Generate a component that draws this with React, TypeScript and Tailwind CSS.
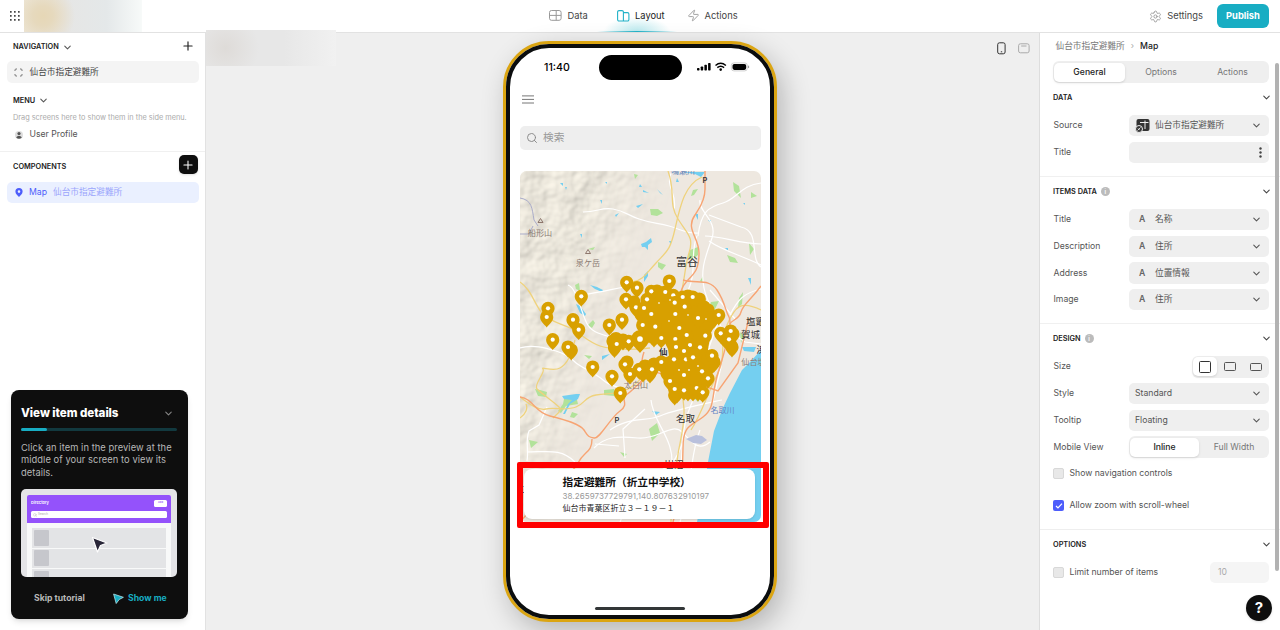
import React from "react";
import { ChevronDown, Search, Settings, Zap, Plus } from "lucide-react";

const SCREEN = "仙台市指定避難所";

function Chevron({ className = "" }: { className?: string }) {
  return <ChevronDown className={`shrink-0 ${className}`} size={11} strokeWidth={2.3} />;
}

function TopBar() {
  return (
    <header className="flex h-[33px] shrink-0 items-center border-b border-[#e2e2e2] bg-white">
      <svg className="ml-[10px]" width="10" height="10" viewBox="0 0 10 10" fill="#333">
        {[0, 4, 8].map((y) =>
          [0, 4, 8].map((x) => <rect key={`${x}-${y}`} x={x} y={y} width="1.7" height="1.7" rx="0.4" />)
        )}
      </svg>
      <div className="ml-1 h-[32px] w-[118px] bg-[radial-gradient(circle_at_16%_50%,#e6d7b6_0,#e6d9bd_10%,transparent_32%),linear-gradient(90deg,#efe9dc_0%,#e6e6e5_35%,#e4e8e9_70%,#f7faf9_100%)]" />
      <nav className="ml-[407px] flex h-full items-center text-[9.33px] text-[#444]">
        <div className="flex items-center">
          <svg width="13" height="11" viewBox="0 0 13 11" fill="none" stroke="#999" strokeWidth="1">
            <rect x="0.5" y="0.5" width="11.6" height="9.8" rx="2" />
            <path d="M0.5 5.4h11.6M7.2 0.5v9.8" />
          </svg>
          <span className="ml-[5.5px] w-[19.5px]">Data</span>
        </div>
        <div className="ml-[10px] flex h-full w-[80px] items-center bg-[linear-gradient(90deg,transparent,#22b2c8_50%,transparent),radial-gradient(ellipse_42%_48%_at_50%_100%,#b9e9ee_0%,transparent_100%)] bg-[length:100%_1px,100%_100%] bg-[position:bottom,center] bg-no-repeat pl-[20px] text-[#222]">
          <svg className="shrink-0" width="13" height="12" viewBox="0 0 13 12" fill="none" stroke="#22b2c8" strokeWidth="1.1">
            <path d="M6.4 2.6V2A1.4 1.4 0 0 0 5 .6H2A1.4 1.4 0 0 0 .6 2v7.6A1.4 1.4 0 0 0 2 11h4.4V2.6H10.500A1.400 1.400 0 0 1 11.900 4v5.600A1.400 1.400 0 0 1 10.500 11H6.400" />
          </svg>
          <span className="ml-[5px]">Layout</span>
        </div>
        <div className="ml-[9.5px] flex items-center">
          <Zap size={13} strokeWidth={1.7} className="text-[#999]" />
          <span className="ml-[5px]">Actions</span>
        </div>
      </nav>
      <div className="ml-auto flex items-center text-[9.33px] text-[#444]">
        <Settings size={13} strokeWidth={1.7} className="text-[#999]" />
        <span className="ml-[5px]">Settings</span>
        <button className="mr-[11px] ml-[14px] h-6 w-[52px] rounded-md bg-[#18adc3] text-[9.33px] font-bold text-white">Publish</button>
      </div>
    </header>
  );
}

function TutorialCard() {
  return (
    <section className="mt-auto mb-[11px] ml-[11px] flex h-[229px] w-[177px] flex-col rounded-lg bg-[#0e0e0e] px-[10px] text-[#b8b8b8] shadow-md">
      <div className="mt-[14px] flex h-[19px] items-center justify-between">
        <h2 className="text-[11.6px] font-extrabold tracking-[-0.05px] whitespace-nowrap text-white">View item details</h2>
        <Chevron className="mr-[4px] text-[#888]" />
      </div>
      <div className="mt-[5px] h-[3px] w-[156px] shrink-0 rounded-full bg-[#12393f]">
        <div className="h-full w-[26px] rounded-full bg-[#18adc3]" />
      </div>
      <p className="mt-[11px] text-[9.33px] leading-[12.4px] tracking-[0.06px] whitespace-nowrap">
        Click an item in the preview at the
        <br />
        middle of your screen to view its
        <br />
        details.
      </p>
      <div className="relative mt-[10px] h-[88px] w-[156px] shrink-0 overflow-hidden rounded-[5px] bg-[#e4e4e7] px-[6px] pt-[6px]">
        <div className="h-full rounded-t-[2px] bg-[#f8f9f9]">
          <div className="h-[28px] rounded-t-[2px] bg-[#9452fb] px-[4px] pt-[4px] text-white">
            <div className="flex h-[8px] items-center justify-between text-[4px] font-semibold">
              <span>Directory</span>
              <span className="flex h-[7px] w-[13px] items-center justify-center rounded-[1.5px] bg-white text-[2.500px] text-[#9452fb]">Add</span>
            </div>
            <div className="mt-[4px] flex h-[7px] items-center rounded-[1.5px] bg-white pl-[2px] text-[3px] text-[#aaa]">
              <Search size={4} />
              <span className="ml-[1px]">Search</span>
            </div>
          </div>
          <div className="mt-[5px] flex flex-col gap-[1px] px-[5px]">
            {[0, 1, 2].map((n) => (
              <div key={n} className="flex h-[19.5px] items-center bg-[#e3e4e6] pl-[2px]">
                <div className="h-[16px] w-[15px] rounded-[1px] bg-[#c6c7cc]" />
              </div>
            ))}
          </div>
        </div>
        <svg className="absolute top-[47px] left-[70px]" width="17" height="18" viewBox="0 0 17 18">
          <path d="M1.500 1.500l14.500 5.500-6.500 2.500-3 6.500z" fill="#292638" stroke="#fff" strokeWidth="1.200" strokeLinejoin="round" />
        </svg>
      </div>
      <div className="flex h-[42px] items-center pl-[13px] text-[8.670px] font-bold">
        <span className="w-[77px]">Skip tutorial</span>
        <svg className="ml-[2px]" width="11" height="11" viewBox="0 0 11 11">
          <path d="M.6 1l9.800 3.300-4.200 2.200-3 4z" fill="#18adc3" stroke="#b4e1e6" strokeWidth="0.800" strokeLinejoin="round" />
        </svg>
        <span className="ml-1 text-[#18adc3]">Show me</span>
      </div>
    </section>
  );
}

function Sidebar() {
  return (
    <aside className="flex w-[205px] shrink-0 flex-col bg-white text-[8.670px] text-[#444]">
      <div className="flex h-[27px] shrink-0 items-center pt-[1px] pr-[10px] pl-[13px] text-[7.330px] font-semibold text-[#222]">
        NAVIGATION
        <Chevron className="ml-[3px] text-[#555]" />
        <Plus size={14} strokeWidth={2} className="mb-[2px] ml-auto text-[#222]" />
      </div>
      <div className="mt-[1px] ml-[7px] flex h-[22px] w-[192px] shrink-0 items-center rounded-[5px] bg-[#f4f4f4] pl-[7px]">
        <svg width="9" height="9" viewBox="0 0 9 9" fill="none" stroke="#777" strokeWidth="1">
          <path d="M1 3V2a1 1 0 0 1 1-1h1M6 1h1a1 1 0 0 1 1 1v1M8 6v1a1 1 0 0 1-1 1H6M3 8H2a1 1 0 0 1-1-1V6" />
        </svg>
        <span className="ml-[6.500px]">{SCREEN}</span>
      </div>
      <div className="mt-[4px] flex h-[26px] shrink-0 items-center pt-[2px] pl-[13px] text-[7.330px] font-semibold text-[#222]">
        MENU
        <Chevron className="mb-[1px] ml-[3px] text-[#555]" />
      </div>
      <div className="mt-[1px] flex h-[9px] shrink-0 items-center pl-[13px] text-[7.330px] whitespace-nowrap text-[#aaa]">Drag screens here to show them in the side menu.</div>
      <div className="mt-[4px] flex h-[15px] shrink-0 items-center pl-[14.500px]">
        <svg width="8" height="8" viewBox="0 0 8 8">
          <circle cx="4" cy="4" r="4" fill="#ddd" />
          <circle cx="4" cy="2.600" r="1.600" fill="#555" />
          <path d="M1.300 6.800C1.300 4.400 6.700 4.400 6.700 6.800Q4 8.600 1.300 6.800" fill="#555" />
        </svg>
        <span className="ml-[7px] text-[#555]">User Profile</span>
      </div>
      <div className="mt-[9px] flex h-[28px] shrink-0 items-center border-t border-[#f0f0f0] pr-[7.500px] pl-[13px] text-[7.330px] font-semibold text-[#222]">
        <span className="pt-[3px]">COMPONENTS</span>
        <span className="mb-[2px] ml-auto flex size-[19px] items-center justify-center rounded-[5px] bg-[#0e0e0e] text-white shadow-sm">
          <Plus size={14} strokeWidth={1.800} />
        </span>
      </div>
      <div className="mt-[3px] ml-[7px] flex h-[21px] w-[192px] shrink-0 items-center rounded-[5px] bg-[#eaf0ff] pl-[7.500px] text-[#4d5dfb]">
        <svg width="8" height="9" viewBox="0 0 8 9">
          <path fillRule="evenodd" d="M4 0a3.600 3.600 0 0 1 3.600 3.600C7.600 6 5.500 7.500 4 9 2.500 7.500.4 6 .4 3.600A3.600 3.600 0 0 1 4 0m0 2.300a1.300 1.300 0 1 0 0 2.600 1.300 1.300 0 0 0 0-2.600" fill="#4d5dfb" />
        </svg>
        <span className="ml-[6.500px]">Map</span>
        <span className="ml-[6px] text-[#9aa5fc]">{SCREEN}</span>
      </div>
      <TutorialCard />
    </aside>
  );
}

const DOTTED_PINS: [number, number][] = [
  [626.7, 282.3], [637, 287.7], [669.3, 281], [626, 299.3], [651.3, 291.3], [665.3, 292], [673.3, 295.3], [682.7, 297], [692.7, 297], [647, 299.3],
  [674.7, 302.7], [581.3, 296.3], [548, 308.3], [546.7, 317], [573, 319.7], [578.7, 329.7], [552.7, 339.7], [568, 347],
  [592.7, 367], [612, 376.3], [620.3, 393], [609.3, 325], [622, 319.7], [636, 307.3], [644, 308], [651.3, 314], [675.3, 314], [684.7, 306.7],
  [698, 318], [718.7, 315], [642.7, 325], [655.3, 326.7], [679.3, 328], [730.7, 331], [720.7, 333.3], [729, 339.3], [661.3, 338],
  [675.3, 339], [686.7, 335], [705.3, 335.7], [628.7, 341.3], [616.7, 344], [690, 345], [676, 347], [684, 351], [700, 347.3],
  [674, 359.3], [686, 359.3], [693, 357.3], [712, 355.7], [661.3, 362], [625, 364.3], [639.3, 369.3], [652, 369.3],
  [630, 374], [670, 381], [684, 375], [702, 371.3], [708, 378.3], [674.7, 389], [684, 390.3], [696.7, 388], [702.7, 392.3],
];

const COVERED_PINS: [number, number][] = [
  [571.3, 350], [616, 338.500], [613, 341], [623, 340], [614.500, 347.500], [627, 362], [645, 366], [648, 367], [654, 364], [643, 372], [650, 373],
  [657, 291], [661, 293], [688, 296], [699.300, 299], [704, 307], [708, 310], [709, 318], [712, 320], [706, 328], [641, 314], [646, 318],
  [730, 343], [732, 347], [725, 338], [733, 334], [705, 355.700], [714, 362], [711, 365], [708, 359], [666, 367], [667, 373],
  [674.700, 395], [677, 393], [688, 391], [693, 391], [698, 391], [649, 333], [654, 337], [634, 302],
];

const ROAD_PATHS = {
  minor: [
    "M583 212c15 0 18-5 30-3s14 6 26 10 18 4 30 7 16 8 30 7", "M520 348c12-4 26 0 36 3s14 6 19 11 22 12 28 18 17 7 24 11", 
    "M568 285c6 2 10 14 14 26s6 18 16 22 16 4 20 6", "M583 295c24-4 38-8 54-10", "M700 200c-2 12 18 20 12 38s-12 30-8 50 16 30 22 52", "M705 236c16 0 36 8 56 8",
    "M709 241c14 10 32 14 52 24", "M761 183c-20 2-24 16-38 20s-22 8-25 33", "M697 236c-8 18 2 38-12 60s4 44 14 60-6 40-12 60-4 32-6 48", "M672 171c-8 16 6 22 2 38M709 215l32 12c20 4 8 32 20 40",
    "M650 330c14-6 38 2 60-10", "M610 430c20-14 36-8 50-14s34-10 62-16", "M594 448c12-12 24-12 44-10s34-16 44-6 16 20 28 10", "M527 461c2-12-2-20 2-30l10-6 8-18M527 452c20 0 34-4 48 10M595 444l24 2",
    "M620 522c10-20 0-34 24-44s32-12 40-40", "M700 430c-10 24-6 46-20 92M651 400c2 24 26 40 20 70", "M730 315c8-16 14-22 31-26M736 320l-26-30M727 330l18 12 16 2M645 409l-22 20 2 29",
    "M695 325l26 42-8 34M674 400l8-30 24-14 12-34",
  ],
  yellow: [
    "M668 171c8 22 0 32 10 48s16 18 11 34-4 30-10 48-8 40-4 60 8 24 9 48-8 42-7 58-6 30-6 55",
    "M702 177c-18 8-22 30-27 52s-8 22-19 34-12 16-23 19",
    "M520 282c12 8 14 22 22 31s18 10 28 15 18 14 30 18 34 4 50 2", "M575 340c-4 16-8 24-15 28s-20-2-17 1-10 16-6 20 18 14 22 18-3 7-6 11",
    "M520 397c8 6 18 14 26 12s20 2 30-2 8-10 20-12 20 0 32-6 16-18 30-22", "M520 418c6-4 8-10 6-14",
    "M761 310c-20-10-26-4-34 15s0 30-10 50-16 40-26 55",
  ],
  orange: [
    "M705 171v18c0 14-8 22-10 26-10 14 4 22 4 38s-4 20-12 28-8 20-10 29",
    "M683 280c14 4 26-2 34 10s8 20 12 27-4 34-11 56-2 34-15 44-20 8-20 31-2 46-10 74",
    "M761 286c-10 14-18 18-20 26s-10 8-11 12", "M520 397c14 2 14 15 30 19s30 8 34 14 4 7 10 8 16-20 26-27 0-12 6-16 13-12 22-20 22 6 42 6l28 10 20-28 11-45",
    "M592 439c0 14-8 12-14 24s-20 16-30 26-16 20-28 33", "M644 352c-6 16 2 22-4 34",
  ],
};

function MapPin({ x, y, large = false, dot = true }: { x: number; y: number; large?: boolean; dot?: boolean }) {
  return (
    <g transform={`translate(${x} ${y}) scale(${large ? 1.35 : 1})`}>
      <path d="M0-6.600A6.600 6.600 0 0 1 6.600 0C6.600 4.600 2.800 6.800 0 10.400-2.800 6.800-6.600 4.600-6.600 0A6.600 6.600 0 0 1 0-6.600" fill="#d8a000" />
      {dot && <circle r="2.100" fill="#fff" />}
    </g>
  );
}

function ShelterMap() {
  return (
    <svg className="block h-[351px] w-[241px] rounded-[7px] font-[Inter,'Noto_Sans_CJK_JP',sans-serif]" viewBox="520 171 241 351">
      <defs>
        <filter id="relief" x="0" y="0" width="100%" height="100%" colorInterpolationFilters="sRGB">
          <feTurbulence type="fractalNoise" baseFrequency="0.045" numOctaves="3" seed="11" result="n" />
          <feDiffuseLighting in="n" surfaceScale="1.900" diffuseConstant="1.090" lightingColor="#eae6da">
            <feDistantLight azimuth="225" elevation="66" />
          </feDiffuseLighting>
        </filter>
        <linearGradient id="fade" x1="0" y1="0" x2="1" y2="0.45">
          <stop offset="0.250" stopColor="#fff" stopOpacity="0.850" />
          <stop offset="0.550" stopColor="#fff" stopOpacity="0" />
        </linearGradient>
        <mask id="west"><rect x="520" y="171" width="241" height="351" fill="url(#fade)" /></mask>
      </defs>
      <rect x="520" y="171" width="241" height="351" fill="#eee8e0" />
      <rect x="520" y="171" width="241" height="351" filter="url(#relief)" mask="url(#west)" />
      <g fill="#b2e29a">
        <path d="M650 209l8 0 5 4-6 3-6-1zM733 182l6 4 2 12-7-7zM751 192l6 4-6 2zM693 190l5-1-4 6-3 1zM690 250l8-3 0 8-6 5-4-3zM658 262l8 3-4 5-4-3zM727 255l8 3 3 5-8-1zM749 243l5 6-4 6zM575 285l4-2 1 8-4-2zM711 302l8-1-5 10-6-1zM739 298l4-6-1 12-4 4z" />
        <path d="M535 389l5 1 7 2-1 5-8-1zM604 390l10-1 0 7-10-1zM584 355l8 1-3 3zM564 399l12-3 2 8-12 2-5 7-3-2 5-7zM572 412l6 2-4 4-4-1zM529 440l9 2-7 6zM649 429l8-6 3 10-8 8zM620 452l7 2-3 3zM694 398l6 1-2 3zM740 332l4 4-3 7zM634 174l4 1-3 4zM588 325l5-5 2 3-3 5zM622 302l8 2-6 4zM700 281l3-5 0 7zM588 249l7-2-2 3z" />
      </g>
      <g fill="#74cff0">
        <path d="M641 244l5-2 5-4 1 4-4 3 0 5-3-3-3 0zM576 304l4 2 6 8-1 2-5-3zM590 285l7 2 6 3-1 2-7-3zM562 396l14-2 4 0-2 5-8 5-5 10-2 0 5-10 4-4-8-1zM644 275l4-4 0 5-4 6zM602 356l8-2-8 6zM652 411l8 1-4 3zM742 347h14l-2 5-10-1z" />
        <path d="M560 183h3v3zM565 187l2 0-1 3zM605 182h2v2zM600 200h2v4zM640 184l2 3h-3zM643 190l6 3-6-1zM657 189l6 6-3-2zM615 215l4-2-3 4zM636 206l7-2-5 4zM683 172l22 0-4 5-6-3zM677 178l2 4h-3zM695 214h3v6zM743 203h2v2zM708 220h3v3zM725 248h3v3zM580 234h2v4zM669 241h2v4zM748 278h3v7zM690 297h3v4z" />
      </g>
      <g fill="none" stroke="#fff" strokeWidth="1.200">{ROAD_PATHS.minor.map((d) => <path key={d} d={d} />)}</g>
      <g fill="none" stroke="#efd27c" strokeWidth="1.300">{ROAD_PATHS.yellow.map((d) => <path key={d} d={d} />)}</g>
      <g fill="none" stroke="#f7a473" strokeWidth="1.400">{ROAD_PATHS.orange.map((d) => <path key={d} d={d} />)}</g>
      <path d="M761 350l-10 11-9 9-12 23-8 17-8 21-6 31-5 31-6 29H761z" fill="#74cff0" />
      <path d="M520 198c12 2 12 10 14 22l4 6M520 234h9l4-8" fill="none" stroke="#a9abc9" strokeWidth="1" />
      <path d="M686 439l10-4 6 1 5 4-6 4-8-1z" fill="#b9c0dc" />
      <g fill="none" stroke="#846b61" strokeWidth="0.900"><path d="M538 222.500l2.500-4 2.500 4zM585.500 253.500l2.500-4 2.500 4z" /></g>
      <g textAnchor="middle" fontSize="8.100" fill="#8b7c75">
        <text x="540" y="235.500">船形山</text><text x="588" y="266">泉ケ岳</text><text x="636" y="387.500">太白山</text><text x="753.500" y="364.500">仙台塩</text>
      </g>
      <g textAnchor="middle" fill="#333">
        <text x="687" y="266" fontSize="11">富谷</text><text x="685.500" y="421.500" fontSize="9.500">名取</text><text x="674" y="468" fontSize="9.500">岩沼</text>
        <text x="755.500" y="324.500" fontSize="9.500">塩竈</text><text x="750.500" y="337.500" fontSize="9.500">賀城</text><text x="761" y="353" fontSize="9">浜</text><text x="520" y="493" fontSize="9">三</text>
        <text x="705" y="183" fontSize="7.500" fontWeight="600">P</text><text x="617" y="422.500" fontSize="7.500" fontWeight="600">P</text>
      </g>
      <text x="683" y="173.500" fontSize="8" textAnchor="middle" fill="#5c80b7">鳴瀬川</text>
      <text x="722.500" y="413" fontSize="8" textAnchor="middle" fill="#6585c5">名取川</text>
      <text x="667.500" y="355" fontSize="8.500" fontWeight="600" textAnchor="end" fill="#333">仙</text>
      <path d="M648 287l19 1 15 5 16 2 8 8 5 15-1 19-2 13 6 12-2 8-5 8-2 16-10 3-20 0-7-10-4-14-10-4 5-9 10-4-1-7-5-10-16-9-4-16 2-18z" fill="#d8a000" />
      {COVERED_PINS.map(([x, y]) => <MapPin key={`${x}-${y}`} x={x} y={y} dot={false} />)}
      {DOTTED_PINS.map(([x, y]) => <MapPin key={`${x}-${y}`} x={x} y={y} />)}
      <MapPin x={640} y={339} large />
      <g fill="#f3e7c8">
        <circle cx="659" cy="303" r="0.900" /><circle cx="670" cy="300" r="0.900" /><circle cx="688" cy="315" r="0.900" /><circle cx="669" cy="321" r="0.900" /><circle cx="706" cy="319" r="0.900" /><circle cx="679" cy="370" r="1.100" /><circle cx="689" cy="370" r="1.100" /><circle cx="698" cy="366" r="1.100" />
      </g>
    </svg>
  );
}

function Phone() {
  return (
    <div className="relative mt-[8px] ml-[297px] h-[580.500px] w-[274px] rounded-[46px] border-[3px] border-[#dba512] bg-white shadow-[6px_10px_28px_rgba(0,0,0,0.240)]">
      <div className="flex h-full flex-col items-center rounded-[43px] border-4 border-[#0b0d0e] bg-white">
        <div className="flex h-[39px] w-full shrink-0 items-center pl-[34px] text-[10.600px] font-medium text-black">
          <span className="w-[55px] pt-[1px]">11:40</span>
          <span className="h-[25px] w-[83px] rounded-full bg-black" />
          <svg className="ml-[15px]" width="54" height="12" viewBox="0 0 54 12">
            <rect x="0" y="6" width="2.500" height="2.500" rx=".7" /><rect x="3.700" y="4.500" width="2.500" height="4" rx=".7" /><rect x="7.400" y="2.800" width="2.500" height="5.700" rx=".7" /><rect x="11.100" y="1" width="2.500" height="7.500" rx=".7" />
            <path d="M18.500 3.500Q23.700-.9 28.900 3.500M20.300 5.600Q23.700 2.800 27.100 5.600" fill="none" stroke="#000" strokeWidth="1.500" /><circle cx="23.700" cy="7.600" r="1.300" />
            <rect x="34.300" y=".9" width="16" height="8" rx="2.600" fill="none" stroke="#bbb" strokeWidth=".7" /><rect x="35.500" y="1.900" width="13.700" height="6" rx="1.800" /><path d="M51.600 3.700v2.400" stroke="#999" />
          </svg>
        </div>
        <div className="flex h-[24px] w-full shrink-0 items-center pl-[12px]">
          <svg width="12" height="9" viewBox="0 0 12 9" stroke="#777" strokeWidth="1"><path d="M0 .9h12M0 4.400h12M0 8h12" /></svg>
        </div>
        <div className="mt-[15px] flex h-6 w-[241px] shrink-0 items-center rounded-[5px] bg-[#eee] pl-[6.500px] text-[10.700px] text-[#999]">
          <Search size={12} strokeWidth={1.900} className="text-[#888]" />
          <span className="ml-[5px]">検索</span>
        </div>
        <div className="relative mt-[21px] shrink-0">
          <ShelterMap />
          <div className="absolute top-[291px] left-[-3px] h-[66px] w-[252px] rounded-[2px] border-[6px] border-[#ff0000]">
            <div className="mt-[1px] ml-[1.500px] flex h-[50px] w-[231px] flex-col rounded-lg bg-white pt-[6px] pl-[38.500px] whitespace-nowrap shadow">
              <strong className="h-[15px] text-[10.700px] leading-[15px] font-bold text-[#111]">指定避難所（折立中学校）</strong>
              <span className="h-[12px] text-[8px] leading-[12px] tracking-[0.070px] text-[#999]">38.2659737729791,140.807632910197</span>
              <span className="h-[12px] text-[8px] leading-[12px] text-[#222]">仙台市青葉区折立３－１９－１</span>
            </div>
          </div>
        </div>
        <div className="mt-auto mb-[4.500px] h-[3px] w-[90px] shrink-0 rounded-full bg-[#333738]" />
      </div>
    </div>
  );
}

function Canvas() {
  return (
    <main className="relative flex-1 border-l border-[#e2e2e2] bg-[#efefef]">
      <Phone />
      <div className="absolute top-[-3px] left-0 h-[36px] w-[130px] bg-[radial-gradient(circle_at_15%_50%,#dedbd8,transparent_30%),linear-gradient(90deg,#e7e7e7,#e7e7e7_60%,#f1f1f1)]" />
      <div className="absolute top-[9px] right-[9px] flex items-center gap-[12px]">
        <svg width="9" height="13" viewBox="0 0 9 13" fill="none" stroke="#333"><rect x=".7" y=".8" width="7.400" height="11" rx="1.800" /><path d="M3.800 9.800h1.400" /></svg>
        <svg width="12" height="11" viewBox="0 0 12 11" fill="none" stroke="#aaa"><rect x=".6" y=".8" width="10.500" height="9" rx="1.800" /><path d="M3.200 3h5.300" /></svg>
      </div>
    </main>
  );
}

function SectionTitle({ children, info = false }: { children: React.ReactNode; info?: boolean }) {
  return (
    <div className="flex h-[28px] shrink-0 items-center pt-[2px] pr-[8px] pl-[13px] text-[7.330px] font-semibold text-[#222]">
      <span className="pt-[1px]">{children}</span>
      {info && <span className="mb-[1px] ml-[4px] flex size-[9px] items-center justify-center rounded-full bg-[#bbb] text-[6px] text-white">i</span>}
      <Chevron className="mb-[1px] ml-auto text-[#444]" />
    </div>
  );
}

function Field({ label, children }: { label: string; children: React.ReactNode }) {
  return (
    <div className="flex h-[21.300px] shrink-0 items-center pr-[11px] pl-[13.500px]">
      <span className="w-[75.500px] shrink-0 whitespace-nowrap">{label}</span>
      {children}
    </div>
  );
}

function Select({ children, icon }: { children: React.ReactNode; icon?: React.ReactNode }) {
  return (
    <div className="flex h-full w-[140px] items-center rounded-[5px] bg-[#efefef] pr-[7px] pl-[6px]">
      {icon && <span className="flex w-[20px] items-center">{icon}</span>}
      <span className="whitespace-nowrap">{children}</span>
      <Chevron className="ml-auto" />
    </div>
  );
}

const TextIcon = <span className="ml-[4px] font-semibold text-[#666]">A</span>;

function Checkbox({ label, checked = false }: { label: string; checked?: boolean }) {
  return (
    <>
      <span className={checked ? "flex size-[11px] items-center justify-center rounded-[2px] bg-[#4d5dfb]" : "size-[11px] rounded-[2px] border border-[#d8d8d8] bg-[#e8e8e8]"}>
        {checked && <svg width="8" height="8" viewBox="0 0 8 8" fill="none" stroke="#fff" strokeWidth="1.200"><path d="M1 4l2 2 4-4.300" /></svg>}
      </span>
      <span className="ml-[5.500px]">{label}</span>
    </>
  );
}

function Inspector() {
  return (
    <aside className="relative flex w-[241px] shrink-0 flex-col border-l border-[#ddd] bg-white text-[8.670px] text-[#555]">
      <div className="flex h-[27px] shrink-0 items-center pl-[15.500px] text-[#777]">
        {SCREEN}
        <span className="mx-[6px] text-[#aaa]">›</span>
        <span className="font-medium text-[#222]">Map</span>
      </div>
      <div className="mt-[1px] ml-[13px] flex h-[22px] w-[216px] shrink-0 items-center rounded-[6px] bg-[#efefef] text-center text-[#777]">
        <span className="ml-[1px] h-[19px] w-[71px] rounded-[5px] bg-white leading-[19px] font-medium text-[#222] shadow-sm">General</span>
        <span className="w-[72px]">Options</span>
        <span className="w-[71px]">Actions</span>
      </div>
      <SectionTitle>DATA</SectionTitle>
      <div className="mt-[4px] flex flex-col gap-[5.400px] border-b border-[#f0f0f0] pb-[13px]">
        <Field label="Source">
          <Select icon={<svg width="15" height="15" viewBox="0 0 15 15"><rect x="1.500" y="1" width="13" height="12" rx="2" fill="#333" /><path d="M5 4.500h8.500M10 2.500v8.500" stroke="#efefef" /><circle cx="4" cy="11" r="3.500" fill="#333" stroke="#efefef" /><path d="M2.500 12.500l3-3M3 10.500l1.600 1.600" stroke="#fff" strokeWidth=".8" /></svg>}>{SCREEN}</Select>
        </Field>
        <Field label="Title">
          <div className="flex h-full w-[140px] items-center justify-end rounded-[5px] bg-[#efefef] pr-[7px]">
            <svg width="3" height="11" viewBox="0 0 3 11" fill="#444"><circle cx="1.500" cy="1.500" r="1.200" /><circle cx="1.500" cy="5.500" r="1.200" /><circle cx="1.500" cy="9.500" r="1.200" /></svg>
          </div>
        </Field>
      </div>
      <SectionTitle info>ITEMS DATA</SectionTitle>
      <div className="mt-[4px] flex flex-col gap-[5.400px] border-b border-[#f0f0f0] pb-[13px]">
        <Field label="Title"><Select icon={TextIcon}>名称</Select></Field>
        <Field label="Description"><Select icon={TextIcon}>住所</Select></Field>
        <Field label="Address"><Select icon={TextIcon}>位置情報</Select></Field>
        <Field label="Image"><Select icon={TextIcon}>住所</Select></Field>
      </div>
      <SectionTitle info>DESIGN</SectionTitle>
      <div className="mt-[4px] flex flex-col gap-[5.400px]">
        <Field label="Size">
          <div className="ml-auto flex h-full w-[77px] items-center rounded-[6px] bg-[#efefef]">
            <span className="ml-[1px] flex h-[19px] w-[24px] items-center justify-center rounded-[5px] bg-white shadow-sm"><i className="h-[12px] w-[12px] rounded-[1.500px] border-[1.500px] border-[#333]" /></span>
            <span className="flex w-[26px] justify-center"><i className="h-[9px] w-[12px] rounded-[1.500px] border border-[#555]" /></span>
            <span className="flex w-[25px] justify-center"><i className="h-[8px] w-[12px] rounded-[1.500px] border border-[#555]" /></span>
          </div>
        </Field>
        <Field label="Style"><Select>Standard</Select></Field>
        <Field label="Tooltip"><Select>Floating</Select></Field>
        <Field label="Mobile View">
          <div className="flex h-full w-[140px] items-center rounded-[6px] bg-[#efefef] text-center text-[#777]">
            <span className="ml-[1px] h-[19px] w-[69px] rounded-[5px] bg-white leading-[19px] font-medium text-[#222] shadow-sm">Inline</span>
            <span className="flex-1">Full Width</span>
          </div>
        </Field>
      </div>
      <div className="mt-[5px] flex h-[22px] shrink-0 items-center pl-[13px]"><Checkbox label="Show navigation controls" /></div>
      <div className="mt-[10px] flex h-[22px] shrink-0 items-center pl-[13px]"><Checkbox label="Allow zoom with scroll-wheel" checked /></div>
      <div className="mt-[12.500px] border-t border-[#eee]"><SectionTitle>OPTIONS</SectionTitle></div>
      <div className="mt-[4px] flex h-[21px] shrink-0 items-center pr-[11px] pl-[13px]">
        <Checkbox label="Limit number of items" />
        <span className="ml-auto flex h-full w-[59px] items-center rounded-[5px] bg-[#f5f5f5] pl-[8px] text-[#aaa]">10</span>
      </div>
      <span className="absolute right-[8px] bottom-[9px] flex size-[26px] items-center justify-center rounded-full bg-[#0e0e0e] text-[15px] font-bold text-white shadow">?</span>
      <div className="absolute top-[30px] right-[1px] h-[508px] w-[4px] rounded-full bg-[#b2b2b2]" />
    </aside>
  );
}

export default function App() {
  return (
    <div className="flex h-[630px] w-[1280px] flex-col overflow-hidden font-[Inter,'Noto_Sans_CJK_JP',sans-serif]">
      <TopBar />
      <div className="flex min-h-0 flex-1">
        <Sidebar />
        <Canvas />
        <Inspector />
      </div>
    </div>
  );
}
